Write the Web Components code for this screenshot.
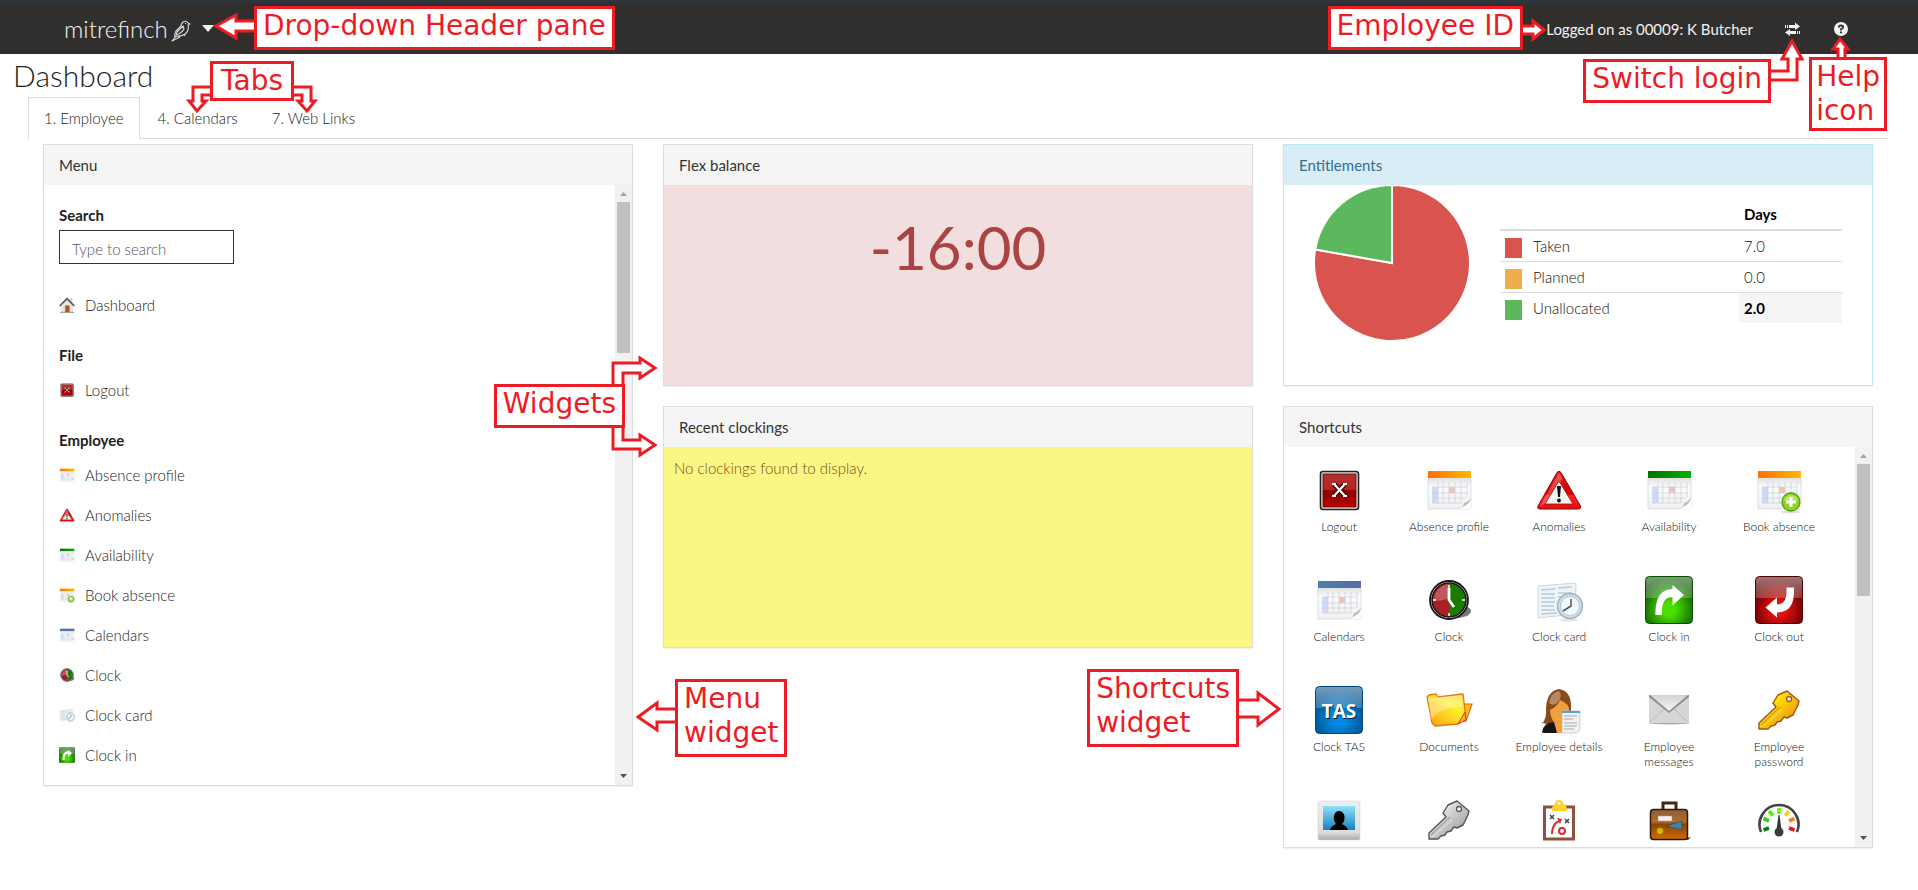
<!DOCTYPE html>
<html lang="en">
<head>
<meta charset="utf-8">
<title>Dashboard</title>
<style>
  body {
    background-color: #fff;
    color: #333;
    font-family: Lato, 'Open Sans', sans-serif;
    font-size: 15px;
    line-height: 20px;
    margin: 0;
  }
</style>
</head>
<body>

<dashboard-page>
  <page-header slot="header"></page-header>
  <page-tabs slot="tabs"></page-tabs>

  <dashboard-column>
    <widget-panel heading="Menu" rows="3" thumb="151">
      <main-menu></main-menu>
    </widget-panel>
    <call-out style="top: 240px; right: 8px">
      Widgets
      <svg slot="after" width="1" height="1"><path d="M-12 4V-21H15V-26L30 -16L15 -6V-11H-2V4M-12 40V65H15V71L30 61L15 51V56H-2V40" /></svg>
    </call-out>
    <call-out style="top: 535px; left: calc(100% + 42px)">
      Menu<br>widget
      <svg slot="before" width="1" height="1"><path d="M4 30H-18V24L-37 38L-18 51V43H4" /></svg>
    </call-out>
  </dashboard-column>

  <dashboard-column>
    <widget-panel heading="Flex balance" rows="1" tone="danger">
      <flex-balance>-16:00</flex-balance>
    </widget-panel>
    <widget-panel heading="Recent clockings" rows="1" tone="warning">
      <empty-message>No clockings found to display.</empty-message>
    </widget-panel>
  </dashboard-column>

  <dashboard-column>
    <widget-panel heading="Entitlements" rows="1" tone="info">
      <entitlement-summary></entitlement-summary>
    </widget-panel>
    <widget-panel heading="Shortcuts" rows="2" thumb="132">
      <shortcut-grid></shortcut-grid>
    </widget-panel>
    <call-out style="top: 525px; right: calc(100% + 44px)">
      Shortcuts<br>widget
      <svg slot="after" width="1" height="1"><path d="M-4 31H19V24L40 40L19 56V48H-4" /></svg>
    </call-out>
  </dashboard-column>

  <call-out slot="notes" style="top: 6px; left: 254px">
    Drop-down Header pane
    <svg slot="before" width="1" height="1"><path d="M4 15H-18V9L-38 20L-18 32V25H4" /></svg>
  </call-out>
  <call-out slot="notes" wide style="top: 61px; left: 210px">
    Tabs
    <svg slot="before" width="1" height="1"><path d="M4 26H-17V40H-21L-13 50L-4 40H-8V34H4" /></svg>
    <svg slot="after" width="1" height="1"><path d="M-4 26H17V40H21L13 50L4 40H8V34H-4" /></svg>
  </call-out>
  <call-out slot="notes" style="top: 6px; right: 395px">
    Employee ID
    <svg slot="after" width="1" height="1"><path d="M-4 20H10V15L21 24L10 33V28H-4" /></svg>
  </call-out>
  <call-out slot="notes" style="top: 59px; right: 147px">
    Switch login
    <svg slot="after" width="1" height="1"><path d="M-4 12H17V0H11L21 -18L31 0H26V21H-4" /></svg>
  </call-out>
  <call-out slot="notes" tight style="top: 57px; right: 31px">
    Help<br>icon
    <svg slot="before" width="1" height="1"><path d="M29 4V-8H24L31 -18L39 -8H36V4" /></svg>
  </call-out>
</dashboard-page>

<script>
const calendar = (from, to, extra = '') => /*html*/`
  <defs>
    <linearGradient id="top"><stop offset="0" stop-color="${from}"/><stop offset="1" stop-color="${to}"/></linearGradient>
    <linearGradient id="sheet" x2="0" y2="1"><stop offset="0" stop-color="#ddd"/><stop offset=".3" stop-color="#fbfbfb"/><stop offset="1" stop-color="#f0f0f0"/></linearGradient>
  </defs>
  <path d="M3 11H46V43H3Z" fill="url(#sheet)" stroke="#ccc" stroke-width=".6"/>
  <path d="M3 5H46V12H3Z" fill="url(#top)"/>
  <path d="M7 21H13V37H7Z" fill="#cfdaf8"/>
  <path d="M24 21H30V27H24Z" fill="#eec4b4"/>
  <path d="M7 21H42M7 27H42M7 32H40M7 37H36M13 16V37M18 16V37M24 16V37M30 16V37M36 16V37M42 16V32" fill="none" stroke="#ccd" stroke-width=".7"/>
  <path d="M34 43Q43 41 46 31V43Z" fill="#fff"/>
  <path d="M34 42Q38 42 39 37Q44 36 46 31Q46 39 34 42Z" fill="#bbb"/>
  ${extra}
`

const key = (light, dark, line) => /*html*/`
  <defs><linearGradient id="key" x2="1" y2="1"><stop offset=".3" stop-color="${light}"/><stop offset="1" stop-color="${dark}"/></linearGradient></defs>
  <path d="M32 5L44 15L43 19L38 29L32 32L29 31L26 35L22 36L20 39L16 40L13 43H4V37L21 21L18 17L23 9Z" fill="url(#key)" stroke="${line}" stroke-width="1.4" stroke-linejoin="round"/>
  <path d="M6 39L25 21" stroke="${line}" stroke-width=".8" opacity=".7"/>
  <path d="M7 41L27 24" stroke="#fff" stroke-width=".8" opacity=".6"/>
  <circle cx="34" cy="13" r="2.5" fill="#fff" stroke="${line}" stroke-width="1.3"/>
`

const tile = (light, dark, content) => /*html*/`
  <defs>
    <radialGradient id="tile" cx=".5" cy=".7" r=".65"><stop offset=".2" stop-color="${light}"/><stop offset="1" stop-color="${dark}"/></radialGradient>
    <linearGradient id="gloss" x2="0" y2="1"><stop offset="0" stop-color="#fff" stop-opacity=".45"/><stop offset="1" stop-color="#fff" stop-opacity=".22"/></linearGradient>
  </defs>
  <rect x=".5" y=".5" width="47" height="47" rx="4" fill="url(#tile)" stroke="${dark}"/>
  <path d="M1 22V5Q1 1 5 1H43Q47 1 47 5V22Z" fill="url(#gloss)"/>
  ${content}
`

const icons = {
  'home': /*html*/`
    <path d="M8 22L24 8L40 22V45H8Z" fill="#eee9e0" stroke="#aaa"/>
    <path d="M33 5H39V18H33Z" fill="#ddd" stroke="#aaa"/>
    <path d="M2 27L24 5L46 27" fill="none" stroke="#555" stroke-width="5"/>
    <path d="M19 26H31V45H19Z" fill="#b5561f" stroke="#843"/>
    <path d="M3 46H45" stroke="#998" stroke-width="3"/>`,
  'logout': /*html*/`
    <defs><linearGradient id="red" x2="0" y2="1"><stop offset="0" stop-color="#a33"/><stop offset=".48" stop-color="#b22"/><stop offset=".5" stop-color="#8c0000"/><stop offset="1" stop-color="#b00"/></linearGradient></defs>
    <rect x="5.5" y="5.5" width="38" height="38" rx="2.5" fill="#e8e0dc" stroke="#222" stroke-width="1.6"/>
    <rect x="8" y="8" width="33" height="33" fill="url(#red)" stroke="#600" stroke-width=".8"/>
    <path d="M19 18L30 30M30 18L19 30" stroke="#400" stroke-width="5"/>
    <path d="M19 18L30 30M30 18L19 30M17 18H21M28 18H32M17 30H21M28 30H32" stroke="#fff" stroke-width="2.2"/>`,
  'calendar-orange': calendar('#ff6f00', '#ffb900'),
  'calendar-green': calendar('#007000', '#00b400'),
  'calendar-blue': calendar('#4c80a8', '#5b68a8'),
  'calendar-add': calendar('#ff6f00', '#ffb900', /*html*/`
    <ellipse cx="36" cy="46" rx="10" ry="1.5" fill="#ddd"/>
    <circle cx="36" cy="36" r="9" fill="#8ed321" stroke="#55a010" stroke-width="1.3"/>
    <path d="M29 34A7.5 7.5 0 0 1 43 34Q36 38 29 34Z" fill="#fff" opacity=".35"/>
    <path d="M36 31V41M31 36H41" stroke="#fff" stroke-width="3"/>`),
  'warning': /*html*/`
    <defs><linearGradient id="warn" x2="0" y2="1"><stop offset="0" stop-color="#d22"/><stop offset=".6" stop-color="#c00"/><stop offset=".65" stop-color="#f22"/><stop offset="1" stop-color="#d11"/></linearGradient></defs>
    <path d="M22 6.5Q24 4 26 6.5L45.5 40Q46 43 43.5 43H4.5Q2 43 3 40Z" fill="url(#warn)" stroke="#900"/>
    <path d="M5 40L24 7L27 12Q22 34 5 40Z" fill="#fff" opacity=".25"/>
    <path d="M24 15L38 38H10Z" fill="#f4f4f4" stroke="#b00" stroke-width=".8"/>
    <path d="M22 20H26L25 31H23Z" fill="#111"/><circle cx="24" cy="34.5" r="1.9" fill="#111"/>`,
  'clock': /*html*/`
    <path d="M10 39Q24 46 42 40Q50 34 42 31Z" fill="#777"/>
    <circle cx="24" cy="24" r="19" fill="#fff" stroke="#161616" stroke-width="1.8"/>
    <path d="M24 7A17 17 0 0 0 24 41Z" fill="#a81f26"/>
    <path d="M24 7A17 17 0 0 1 24 41Z" fill="#1c7a00"/>
    <circle cx="24" cy="24" r="17" fill="none" stroke="#161616" stroke-width="1.5"/>
    <path d="M9 24A16 16 0 0 1 24 8V22Q16 26 9 24Z" fill="#fff" opacity=".25"/>
    <path d="M24 9V12M24 37V40M8 24H11M37 24H40" stroke="#fff" stroke-width="1.5"/>
    <path d="M24 12V24L29 31" fill="none" stroke="#fff" stroke-width="2.8"/>`,
  'clock-card': /*html*/`
    <ellipse cx="34" cy="44" rx="10" ry="1.5" fill="#e4e4e4"/>
    <path d="M3 10L41 7L40 38L3 42Z" fill="#eef4f8" stroke="#ccd8df"/>
    <path d="M6 14L20 13M23 12L37 11M6 18H20M23 17H37M6 22H20M23 21H37M6 26H20M6 30H19M6 34H20M6 38L22 37" stroke="#b9ccd7" stroke-width="1.5"/>
    <circle cx="35" cy="30" r="12.5" fill="#cfdde6" stroke="#9eb4c3" stroke-width="1.5"/>
    <circle cx="35" cy="30" r="9.5" fill="#f4f9fc" stroke="#b5c8d5"/>
    <path d="M36 23V30L28 35" fill="none" stroke="#456" stroke-width="1.5"/>`,
  'clock-in': tile('#4be000', '#064f00', '<path d="M10.5 39C10.5 24 14 13.5 27.5 13V9L39 19L27.5 29.5V21C19 21 16.5 28 17 39Z" fill="#fff"/>'),
  'clock-out': tile('#e81010', '#520000', '<path d="M31.5 11.5H39C39.5 27 36 36 22 36.5V41.5L10.5 31.5L22 21.5V28.5C29 28 32 24 31.5 11.5Z" fill="#fff"/>'),
  'tas': tile('#0088e0', '#004a84', '<text x="25" y="33" text-anchor="middle" font-family="Open Sans, sans-serif" font-weight="700" font-size="19" fill="#024" aria-hidden="true">TAS</text><text x="24" y="32" text-anchor="middle" font-family="Open Sans, sans-serif" font-weight="700" font-size="19" fill="#fff">TAS</text>'),
  'folder': /*html*/`
    <defs><linearGradient id="folder" x1="1" x2="0" y2="1"><stop offset="0" stop-color="#ffd21a"/><stop offset=".35" stop-color="#fff12a"/><stop offset="1" stop-color="#ff9a10"/></linearGradient></defs>
    <path d="M28 18L47 18L41 35L10 39Z" fill="#ffc21a" stroke="#e8641a" stroke-width="1.2"/>
    <path d="M2 11L4 9L11 8L13 11L38 8L41 32L33 38L10 40L7 37Z" fill="url(#folder)" stroke="#e8741a" stroke-width="1.3" stroke-linejoin="round"/>
    <path d="M3 12L37 9L38 21Q16 20 6 34Z" fill="#fff" opacity=".35"/>
    <path d="M33 38L40 26L41 34Z" fill="#ffb020" stroke="#e3361a"/>`,
  'person': /*html*/`
    <path d="M7 38Q12 32 11 22Q12 5 24 3Q36 5 36 20V36H20Q12 40 7 36Z" fill="#8a4a17"/>
    <path d="M15 24Q22 21 25 14Q35 18 34 25V36L27 40H21Q15 31 15 24Z" fill="#f0a03c"/>
    <path d="M14 17Q16 6 24 5Q28 10 23 16Q19 21 14 17Z" fill="#fff" opacity=".35"/>
    <path d="M7 46Q9 36 19 36L24 41V47H8Z" fill="#161616"/>
    <path d="M19 36L30 38V47H22Z" fill="#f0a03c"/>
    <path d="M27 25H45V44L41 47H27Z" fill="#f2f2f2" stroke="#bbb" stroke-width=".7"/>
    <path d="M27 25H45V27H27Z" fill="#49a9dc"/>
    <path d="M29 30H42M29 33H38M29 37H42M29 40H42M29 43H39" stroke="#aaa"/>`,
  'envelope': /*html*/`
    <defs><linearGradient id="flap" x2="0" y2="1"><stop offset="0" stop-color="#d2d2d2"/><stop offset="1" stop-color="#f6f6f6"/></linearGradient></defs>
    <ellipse cx="24" cy="37" rx="20" ry="1.5" fill="#aaa"/>
    <path d="M4 9H44V37H4Z" fill="#d6d6d6"/>
    <path d="M4 37L19 23M44 37L29 23" stroke="#bbb"/>
    <path d="M4 9H44V11L24 27L4 11Z" fill="#8c8c8c"/>
    <path d="M5 9H43L24 25Z" fill="url(#flap)"/>`,
  'key-gold': key('#ffe600', '#e8761a', '#a35410'),
  'key-silver': key('#e2e2e2', '#8c8c8c', '#555'),
  'photo': /*html*/`
    <defs>
      <linearGradient id="frame" x2="0" y2="1"><stop offset="0" stop-color="#eee"/><stop offset=".8" stop-color="#ddd"/><stop offset="1" stop-color="#aaa"/></linearGradient>
      <linearGradient id="screen" x2="0" y2="1"><stop offset="0" stop-color="#8fe0fa"/><stop offset="1" stop-color="#1683bb"/></linearGradient>
    </defs>
    <rect x="3" y="5" width="42" height="39" rx="2" fill="url(#frame)" stroke="#ccc" stroke-width=".5"/>
    <path d="M8 10H40V34H8Z" fill="url(#screen)"/>
    <path d="M15 34Q16 30 21 28Q18 24 19 20Q20 15 24 15Q28 15 29.5 20Q30 25 27 28Q32 30 33 34Z"/>`,
  'plan': /*html*/`
    <path d="M9.5 11H38.5V43H9.5Z" fill="#fff" stroke="#8c5140" stroke-width="3"/>
    <path d="M20 8A4 4 0 0 1 28 8Q32 8 32 15H17Q17 8 20 8Z" fill="#fbd32a"/><circle cx="24" cy="7.5" r="1.5" fill="#fff"/>
    <path d="M15 19L19 23M19 19L15 23M30 23L34 27M34 23L30 27" stroke="#444" stroke-width="1.5"/>
    <path d="M17 38Q17 28 24 25" fill="none" stroke="#e0292c" stroke-width="2"/><path d="M22 22L27 23L25 28Z" fill="#e0292c"/>
    <circle cx="27" cy="35" r="3" fill="none" stroke="#e0292c" stroke-width="2"/>`,
  'briefcase': /*html*/`
    <defs><linearGradient id="case" x2="0" y2="1"><stop offset="0" stop-color="#8d5c35"/><stop offset=".4" stop-color="#b06c2e"/><stop offset=".5" stop-color="#8c4600"/><stop offset="1" stop-color="#d46a08"/></linearGradient></defs>
    <path d="M38 43L46 41L43 44Z" fill="#333"/>
    <path d="M18 14V7H31V14" fill="none" stroke="#4a2308" stroke-width="3"/>
    <rect x="5.5" y="13.5" width="37" height="30" rx="3" fill="url(#case)" stroke="#2e1a0c" stroke-width="1.5"/>
    <path d="M13 20H27V25H13Z" fill="#f8f0e8" stroke="#a88" stroke-width=".5"/>
    <path d="M21 30L37 25V34Z" fill="#3d85a8" stroke="#3a3a3a" stroke-width=".6"/>
    <circle cx="15" cy="35" r="3.5" fill="#dcb800" stroke="#7c5a00" stroke-width=".6"/>`,
  'gauge': /*html*/`
    <path d="M6 36A19.5 19.5 0 1 1 42 36" fill="none" stroke="#444" stroke-width="2.6"/>
    <g fill="none" stroke-width="3.6">
      <path d="M8.5 34L14 32" stroke="#0a7d12"/><path d="M8.5 22.5L14 25" stroke="#2fd016"/>
      <path d="M14 15L18 19.5" stroke="#52ea10"/><path d="M24 12V18" stroke="#6df01a"/>
      <path d="M34 15L30 19.5" stroke="#f3d21a"/><path d="M39.5 22.5L34 25" stroke="#f5821f"/>
      <path d="M39.5 34L34 32" stroke="#e8151b"/>
    </g>
    <path d="M23.5 19H24.5L26.5 34H21.5Z" fill="#333"/><circle cx="24" cy="36" r="4.5" fill="#3d3d3d"/>`
}

class AppIcon extends HTMLElement {

  constructor () {
    super()
    this.shadow = this.attachShadow({ mode: 'open' })
  }

  connectedCallback () {
    this.shadow.innerHTML =
    /*html*/`
    <style>
      :host {
        display: block;
        flex: none;
        height: var(--icon-size, 16px);
        width: var(--icon-size, 16px);
      }

      svg {
        display: block;
        height: 100%;
        width: 100%;
      }
    </style>

    <svg viewBox="0 0 48 48" aria-hidden="true">${icons[this.getAttribute('name')]}</svg>
    `
  }
}

class DashboardPage extends HTMLElement {

  constructor () {
    super()
    this.shadow = this.attachShadow({ mode: 'open' })
  }

  connectedCallback () {
    this.shadow.innerHTML =
    /*html*/`
    <style>
      :host {
        display: block;
        position: relative;
      }

      h1 {
        color: #222;
        font-size: 30px;
        font-weight: 300;
        line-height: 43px;
        margin: 0 13px;
      }

      .content {
        margin: 0 30px 0 28px;
      }

      main {
        align-items: start;
        display: grid;
        gap: 30px;
        grid-template-columns: repeat(3, 1fr);
        padding: 5px 15px 40px;
      }
    </style>

    <slot name="header"></slot>
    <h1>Dashboard</h1>
    <div class="content">
      <slot name="tabs"></slot>
      <main><slot></slot></main>
    </div>
    <slot name="notes"></slot>
    `
  }
}

class PageHeader extends HTMLElement {

  constructor () {
    super()
    this.shadow = this.attachShadow({ mode: 'open' })
  }

  connectedCallback () {
    this.shadow.innerHTML =
    /*html*/`
    <style>
      :host {
        align-items: center;
        background-color: #312f2e;
        border-top: 3px solid #2f353a;
        box-sizing: border-box;
        color: #f3f3f3;
        display: flex;
        height: 54px;
        justify-content: space-between;
        padding: 0 69px 0 64px;
      }

      button {
        background: none;
        border: 0;
        color: inherit;
        cursor: pointer;
        display: flex;
        font: inherit;
        padding: 0;
      }

      svg {
        display: block;
      }

      .brand {
        align-items: center;
        font-size: 24px;
        font-weight: 300;
        line-height: 30px;
      }

      .bird {
        margin: 4px 11px 0 3px;
      }

      .account {
        align-items: center;
        display: flex;
        gap: 32px;
      }
    </style>

    <button class="brand">
      mitrefinch
      <svg class="bird" width="20" height="22" viewBox="0 0 20 22" fill="none" stroke="#ddd" stroke-width="1.1" stroke-linejoin="round">
        <path d="M19 4L17 3Q15 0 12 2Q10 4 10 6L5 11Q3 14 4 17L7 16Q15 16 17 10Q18 7 17 5Z" />
        <path d="M12 6L6 12L5 15Q11 13 13 9ZM5 16L1 21L7 18L9 16M9 16L8 18M13 14L14 16" />
        <path d="M14 3.5H15" />
      </svg>
      <svg width="12" height="7" viewBox="0 0 12 7"><path d="M0 0H12L6 7Z" fill="#f3f3f3" /></svg>
    </button>
    <div class="account">
      <span>Logged on as 00009: K Butcher</span>
      <button aria-label="Switch login">
        <svg width="16" height="14" viewBox="0 0 16 14" fill="#f3f3f3"><path d="M0 3H1V6H0ZM2 3H3V6H2ZM4 3H10V0.5L15 4.5L10 8V6H4ZM15 9H14V12H15ZM13 9H12V12H13ZM11 9H5V7L0 10.5L5 14V12H11Z" /></svg>
      </button>
      <button aria-label="Help">
        <svg width="16" height="16" viewBox="0 0 16 16"><circle cx="8" cy="8" r="7" fill="#f3f3f3" /><path d="M5.8 6.5Q6 4.5 8 4.5Q10.2 4.5 10.2 6.3Q10.2 7.5 8 8.2V9.5" fill="none" stroke="#312f2e" stroke-width="1.8" /><path d="M7 10.5H9V12.3H7Z" fill="#312f2e" /></svg>
      </button>
    </div>
    `
  }
}

class PageTabs extends HTMLElement {

  constructor () {
    super()
    this.shadow = this.attachShadow({ mode: 'open' })
  }

  connectedCallback () {
    this.shadow.innerHTML =
    /*html*/`
    <style>
      :host {
        display: block;
      }

      nav {
        border-bottom: 1px solid #ddd;
        display: flex;
        gap: 2px;
      }

      a {
        border: 1px solid transparent;
        border-bottom: 0;
        color: #222;
        font-weight: 300;
        line-height: 40px;
        margin-bottom: -1px;
        padding: 0 15px 1px;
        text-decoration: none;
      }

      a.active {
        background-color: #fff;
        border-color: #ddd;
      }
    </style>

    <nav>
      <a class="active" href="#employee">1. Employee</a>
      <a href="#calendars">4. Calendars</a>
      <a href="#links">7. Web Links</a>
    </nav>
    `
  }
}

class DashboardColumn extends HTMLElement {

  constructor () {
    super()
    this.shadow = this.attachShadow({ mode: 'open' })
  }

  connectedCallback () {
    this.shadow.innerHTML =
    /*html*/`
    <style>
      :host {
        display: flex;
        flex-direction: column;
        gap: 20px;
        min-width: 0;
        position: relative;
      }
    </style>

    <slot></slot>
    `
  }
}

class WidgetPanel extends HTMLElement {

  constructor () {
    super()
    this.shadow = this.attachShadow({ mode: 'open' })
  }

  connectedCallback () {
    const thumb = this.getAttribute('thumb')

    this.shadow.innerHTML =
    /*html*/`
    <style>
      :host {
        --line: #ddd;
        --head: #f5f5f5;
        border: 1px solid var(--line);
        box-shadow: 0 1px 1px rgba(0, 0, 0, 0.05);
        display: block;
      }

      :host([tone="info"]) {
        --line: #bce8f1;
        --head: #d9edf7;
      }

      h2 {
        background-color: var(--head);
        color: #333;
        font-size: 15px;
        font-weight: 400;
        line-height: 40px;
        margin: 0;
        padding: 0 15px;
      }

      :host([tone="info"]) h2 {
        color: #31708f;
      }

      .body {
        display: flex;
        height: calc(var(--rows) * 200px);
        overflow: hidden;
      }

      :host([tone="danger"]) .body {
        background-color: #f2dede;
        color: #a94442;
      }

      :host([tone="warning"]) .body {
        background-color: #fcf682;
        color: #705020;
      }

      ::slotted(*) {
        flex: 1;
        min-width: 0;
      }
    </style>

    <h2>${this.getAttribute('heading')}</h2>
    <div class="body" style="--rows: ${this.getAttribute('rows')}">
      <slot></slot>
      ${thumb ? `<scroll-track thumb="${thumb}"></scroll-track>` : ''}
    </div>
    `
  }
}

class ScrollTrack extends HTMLElement {

  constructor () {
    super()
    this.shadow = this.attachShadow({ mode: 'open' })
  }

  connectedCallback () {
    this.shadow.innerHTML =
    /*html*/`
    <style>
      :host {
        background-color: #f1f1f1;
        display: flex;
        flex: none;
        flex-direction: column;
        width: 17px;
      }

      .thumb {
        background-color: #c1c1c1;
        margin: 0 2px auto;
      }
    </style>

    <svg width="17" height="17" viewBox="0 0 17 17"><path d="M5 11H12L8.5 7Z" fill="#a3a3a3" /></svg>
    <div class="thumb" style="height: ${this.getAttribute('thumb')}px"></div>
    <svg width="17" height="17" viewBox="0 0 17 17"><path d="M5 6H12L8.5 10Z" fill="#505050" /></svg>
    `
  }
}

class MainMenu extends HTMLElement {

  constructor () {
    super()
    this.shadow = this.attachShadow({ mode: 'open' })
    this.groups = [
      { title: 'File', items: [['logout', 'Logout']] },
      {
        title: 'Employee',
        items: [
          ['calendar-orange', 'Absence profile'],
          ['warning', 'Anomalies'],
          ['calendar-green', 'Availability'],
          ['calendar-add', 'Book absence'],
          ['calendar-blue', 'Calendars'],
          ['clock', 'Clock'],
          ['clock-card', 'Clock card'],
          ['clock-in', 'Clock in']
        ]
      }
    ]
  }

  connectedCallback () {
    this.render()
  }

  renderItem ([icon, label]) {
    return /*html*/`<a href="#${icon}"><app-icon name="${icon}"></app-icon>${label}</a>`
  }

  render () {
    this.shadow.innerHTML =
    /*html*/`
    <style>
      :host {
        display: block;
        padding: 15px 15px 0;
      }

      label, h3 {
        color: #222;
        display: block;
        font-size: 15px;
        font-weight: 700;
        line-height: 30px;
        margin: 0;
      }

      h3 {
        margin-top: 15px;
      }

      input {
        border: 1px solid #333;
        box-sizing: border-box;
        color: #555;
        display: block;
        font: inherit;
        font-weight: 300;
        height: 34px;
        margin-bottom: 21px;
        padding: 4px 12px 0;
        width: 175px;
      }

      input::placeholder {
        color: #555;
      }

      a {
        align-items: center;
        color: #222;
        display: flex;
        font-weight: 300;
        gap: 10px;
        height: 40px;
        text-decoration: none;
      }
    </style>

    <label for="search">Search</label>
    <input id="search" type="text" placeholder="Type to search">
    ${this.renderItem(['home', 'Dashboard'])}
    ${this.groups.map(group => `<h3>${group.title}</h3>${group.items.map(item => this.renderItem(item)).join('')}`).join('')}
    `
  }
}

class FlexBalance extends HTMLElement {

  constructor () {
    super()
    this.shadow = this.attachShadow({ mode: 'open' })
  }

  connectedCallback () {
    this.shadow.innerHTML =
    /*html*/`
    <style>
      :host {
        display: block;
        font-size: 60px;
        line-height: 80px;
        padding-top: 22px;
        text-align: center;
      }
    </style>

    <slot></slot>
    `
  }
}

class EmptyMessage extends HTMLElement {

  constructor () {
    super()
    this.shadow = this.attachShadow({ mode: 'open' })
  }

  connectedCallback () {
    this.shadow.innerHTML =
    /*html*/`
    <style>
      :host {
        display: block;
        font-weight: 300;
        padding: 11px 10px;
      }
    </style>

    <slot></slot>
    `
  }
}

class EntitlementSummary extends HTMLElement {

  constructor () {
    super()
    this.shadow = this.attachShadow({ mode: 'open' })
    this.rows = [
      { name: 'Taken', days: 7, color: '#d9534f' },
      { name: 'Planned', days: 0, color: '#f0ad4e' },
      { name: 'Unallocated', days: 2, color: '#5cb85c' }
    ]
  }

  connectedCallback () {
    this.render()
  }

  // Slices run clockwise from twelve o'clock
  renderSlices () {
    const total = this.rows.reduce((sum, row) => sum + row.days, 0)
    const point = turn => `${78 + 78 * Math.sin(turn * 2 * Math.PI)} ${78 - 78 * Math.cos(turn * 2 * Math.PI)}`
    let start = 0

    return this.rows.filter(row => row.days > 0).map(row => {
      const end = start + row.days / total
      const path = `M78 78L${point(start)}A78 78 0 ${end - start > 0.5 ? 1 : 0} 1 ${point(end)}Z`
      start = end
      return `<path d="${path}" fill="${row.color}" stroke="#fff" stroke-width="2" />`
    }).join('')
  }

  render () {
    this.shadow.innerHTML =
    /*html*/`
    <style>
      :host {
        align-items: start;
        display: flex;
        gap: 30px;
        padding: 0 30px;
      }

      svg {
        flex: none;
      }

      table {
        border-collapse: collapse;
        flex: 1;
        margin-top: 14px;
      }

      th, td {
        border-bottom: 1px solid #ddd;
        color: #111;
        font-weight: 300;
        height: 30px;
        padding: 0 5px;
        text-align: left;
      }

      thead th {
        border-bottom-width: 2px;
        color: #000;
        font-weight: 700;
      }

      tr > :last-child {
        width: 93px;
      }

      tbody tr:last-child > * {
        border-bottom: 0;
      }

      tbody tr:last-child td {
        background-color: #f5f5f5;
        color: #000;
        font-weight: 700;
      }

      .name {
        align-items: center;
        display: flex;
        gap: 11px;
      }

      .swatch {
        height: 20px;
        margin-top: 4px;
        width: 17px;
      }
    </style>

    <svg width="156" height="156" viewBox="0 0 156 156" role="img" aria-label="Entitlement split">${this.renderSlices()}</svg>
    <table>
      <thead><tr><th></th><th scope="col">Days</th></tr></thead>
      <tbody>
        ${this.rows.map(row => `
        <tr>
          <th scope="row"><span class="name"><span class="swatch" style="background-color: ${row.color}"></span>${row.name}</span></th>
          <td>${row.days.toFixed(1)}</td>
        </tr>`).join('')}
      </tbody>
    </table>
    `
  }
}

class ShortcutGrid extends HTMLElement {

  constructor () {
    super()
    this.shadow = this.attachShadow({ mode: 'open' })
    this.shortcuts = [
      ['logout', 'Logout'], ['calendar-orange', 'Absence profile'], ['warning', 'Anomalies'],
      ['calendar-green', 'Availability'], ['calendar-add', 'Book absence'],
      ['calendar-blue', 'Calendars'], ['clock', 'Clock'], ['clock-card', 'Clock card'],
      ['clock-in', 'Clock in'], ['clock-out', 'Clock out'],
      ['tas', 'Clock TAS'], ['folder', 'Documents'], ['person', 'Employee details'],
      ['envelope', 'Employee messages'], ['key-gold', 'Employee password'],
      ['photo', ''], ['key-silver', ''], ['plan', ''], ['briefcase', ''], ['gauge', '']
    ]
  }

  connectedCallback () {
    this.shadow.innerHTML =
    /*html*/`
    <style>
      :host {
        --icon-size: 48px;
        align-content: start;
        display: grid;
        grid-auto-rows: 110px;
        grid-template-columns: repeat(auto-fill, 110px);
        padding-top: 19px;
      }

      a {
        align-items: center;
        color: #111;
        display: flex;
        flex-direction: column;
        font-size: 12px;
        font-weight: 300;
        gap: 5px;
        line-height: 15px;
        text-align: center;
        text-decoration: none;
      }

      span {
        max-width: 90px;
      }
    </style>

    ${this.shortcuts.map(([icon, label]) => `<a href="#${icon}" aria-label="${label || icon}"><app-icon name="${icon}"></app-icon>${label ? `<span>${label}</span>` : ''}</a>`).join('')}
    `
  }
}

class CallOut extends HTMLElement {

  constructor () {
    super()
    this.shadow = this.attachShadow({ mode: 'open' })
  }

  connectedCallback () {
    this.shadow.innerHTML =
    /*html*/`
    <style>
      :host {
        color: #ed1c24;
        font-family: 'DejaVu Sans', Verdana, sans-serif;
        font-size: 28px;
        line-height: 34px;
        position: absolute;
        white-space: nowrap;
        z-index: 2;
      }

      .box {
        background-color: #fff;
        border: 3px solid;
        padding: 0 6px 4px;
        position: relative;
      }

      :host([tight]) .box {
        padding: 0 4px;
      }

      :host([wide]) .box {
        padding: 0 8px;
      }

      .before, .after {
        position: absolute;
        top: 0;
      }

      .before {
        left: 0;
      }

      .after {
        left: 100%;
      }

      ::slotted(svg) {
        display: block;
        fill: #fff;
        overflow: visible;
        stroke: #ed1c24;
        stroke-width: 3px;
      }
    </style>

    <div class="before"><slot name="before"></slot></div>
    <div class="after"><slot name="after"></slot></div>
    <div class="box"><slot></slot></div>
    `
  }
}

customElements.define('app-icon', AppIcon)
customElements.define('dashboard-page', DashboardPage)
customElements.define('page-header', PageHeader)
customElements.define('page-tabs', PageTabs)
customElements.define('dashboard-column', DashboardColumn)
customElements.define('widget-panel', WidgetPanel)
customElements.define('scroll-track', ScrollTrack)
customElements.define('main-menu', MainMenu)
customElements.define('flex-balance', FlexBalance)
customElements.define('empty-message', EmptyMessage)
customElements.define('entitlement-summary', EntitlementSummary)
customElements.define('shortcut-grid', ShortcutGrid)
customElements.define('call-out', CallOut)
</script>
</body>
</html>
